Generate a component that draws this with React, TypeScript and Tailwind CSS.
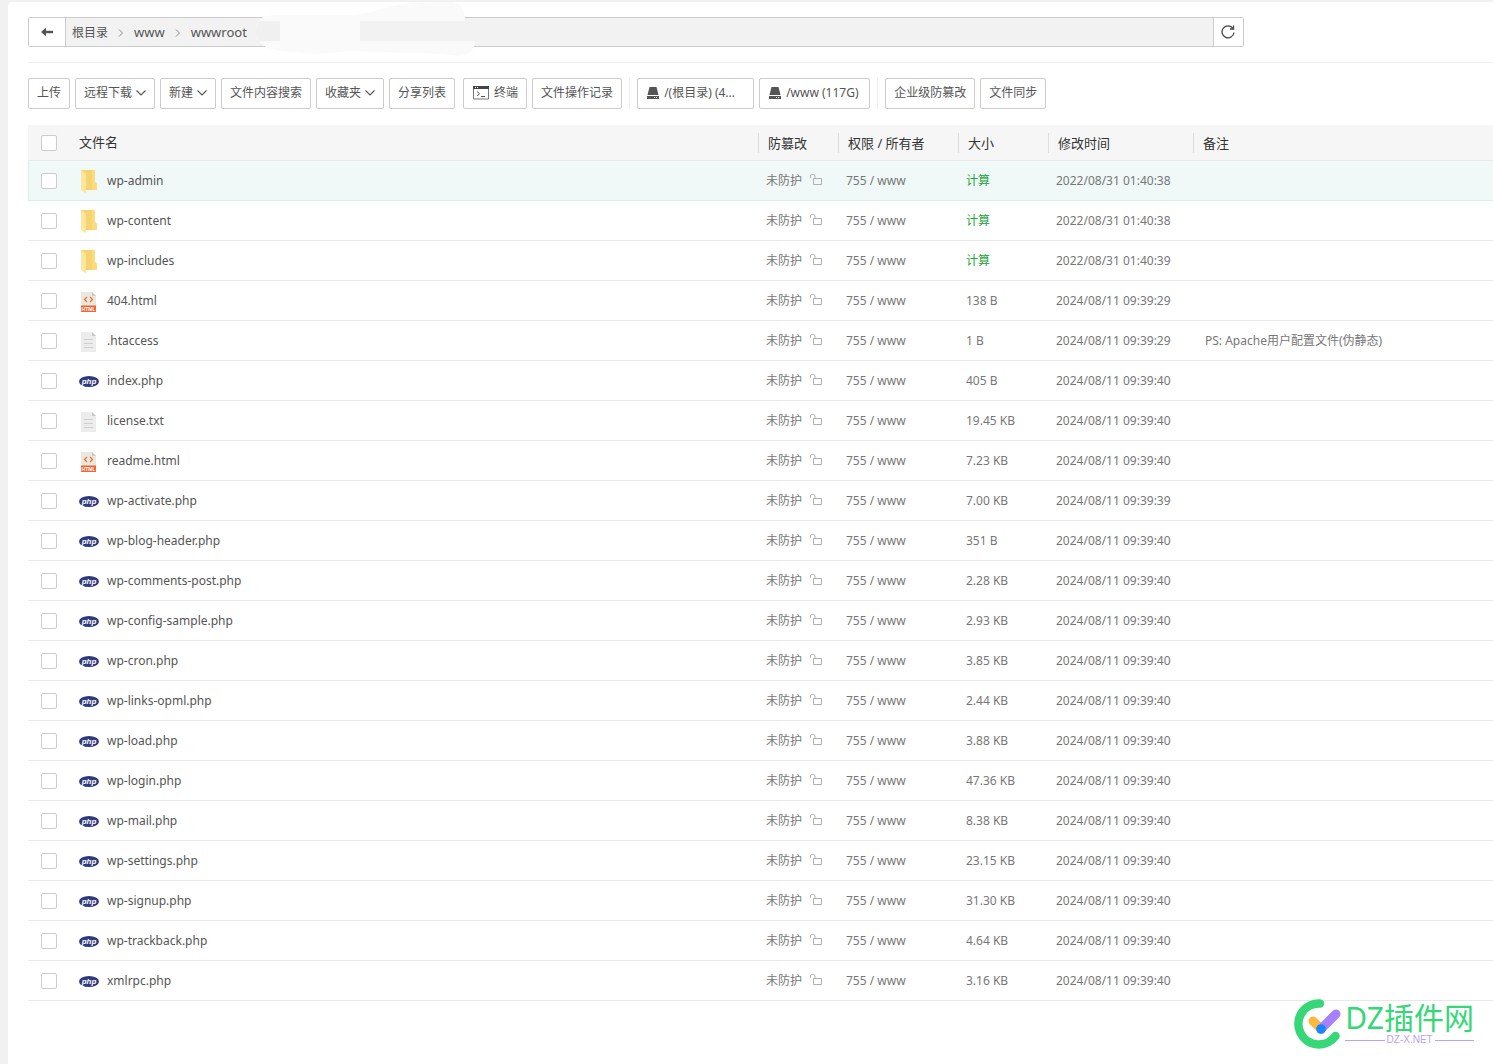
import React from 'react';
import { clsx } from 'clsx';

type FileKind = 'folder' | 'html' | 'text' | 'php';

interface FileItem {
	name: string;
	kind: FileKind;
	size?: string;
	time: string;
	note?: string;
}

const FILES: FileItem[] = [
	{ name: 'wp-admin', kind: 'folder', time: '2022/08/31 01:40:38' },
	{ name: 'wp-content', kind: 'folder', time: '2022/08/31 01:40:38' },
	{ name: 'wp-includes', kind: 'folder', time: '2022/08/31 01:40:39' },
	{ name: '404.html', kind: 'html', size: '138 B', time: '2024/08/11 09:39:29' },
	{
		name: '.htaccess',
		kind: 'text',
		size: '1 B',
		time: '2024/08/11 09:39:29',
		note: 'PS: Apache用户配置文件(伪静态)',
	},
	{ name: 'index.php', kind: 'php', size: '405 B', time: '2024/08/11 09:39:40' },
	{ name: 'license.txt', kind: 'text', size: '19.45 KB', time: '2024/08/11 09:39:40' },
	{ name: 'readme.html', kind: 'html', size: '7.23 KB', time: '2024/08/11 09:39:40' },
	{ name: 'wp-activate.php', kind: 'php', size: '7.00 KB', time: '2024/08/11 09:39:39' },
	{ name: 'wp-blog-header.php', kind: 'php', size: '351 B', time: '2024/08/11 09:39:40' },
	{ name: 'wp-comments-post.php', kind: 'php', size: '2.28 KB', time: '2024/08/11 09:39:40' },
	{ name: 'wp-config-sample.php', kind: 'php', size: '2.93 KB', time: '2024/08/11 09:39:40' },
	{ name: 'wp-cron.php', kind: 'php', size: '3.85 KB', time: '2024/08/11 09:39:40' },
	{ name: 'wp-links-opml.php', kind: 'php', size: '2.44 KB', time: '2024/08/11 09:39:40' },
	{ name: 'wp-load.php', kind: 'php', size: '3.88 KB', time: '2024/08/11 09:39:40' },
	{ name: 'wp-login.php', kind: 'php', size: '47.36 KB', time: '2024/08/11 09:39:40' },
	{ name: 'wp-mail.php', kind: 'php', size: '8.38 KB', time: '2024/08/11 09:39:40' },
	{ name: 'wp-settings.php', kind: 'php', size: '23.15 KB', time: '2024/08/11 09:39:40' },
	{ name: 'wp-signup.php', kind: 'php', size: '31.30 KB', time: '2024/08/11 09:39:40' },
	{ name: 'wp-trackback.php', kind: 'php', size: '4.64 KB', time: '2024/08/11 09:39:40' },
	{ name: 'xmlrpc.php', kind: 'php', size: '3.16 KB', time: '2024/08/11 09:39:40' },
];

const FolderIcon = () => (
	<svg width="20" height="26" viewBox="0 0 20 26">
		<path d="M2 2H16V14L18 16V22H4Z" fill="#f5d470" />
		<path d="M13 2H16V14L18 16V22H13Z" fill="#f9dc80" />
		<path d="M2 2L7 6V25.500L2 22Z" fill="#fde59b" />
	</svg>
);

const HtmlIcon = () => (
	<svg width="20" height="26" viewBox="0 0 20 26">
		<path d="M2 4H13L17 8V24H2Z" fill="#e8e8dc" />
		<path d="M13 4L17 8H13Z" fill="#c9c9be" />
		<path
			d="M8 9L5.500 11.500L8 14M11 9L13.500 11.500L11 14"
			fill="none"
			stroke="#f16c3a"
			strokeWidth="1.200"
		/>
		<rect x="2" y="17.500" width="15" height="6.500" fill="#f0642f" />
		<text
			x="9.500"
			y="22.800"
			textAnchor="middle"
			fontSize="5"
			fontWeight="700"
			fontFamily="Liberation Sans, sans-serif"
			fill="#fff"
		>
			HTML
		</text>
	</svg>
);

const TextIcon = () => (
	<svg width="20" height="26" viewBox="0 0 20 26">
		<path d="M2 4H13L17 8V24H2Z" fill="#ececec" />
		<path d="M13 4L17 8H13Z" fill="#c6c6c6" />
		<path d="M5 11.500H14M5 15.500H14M5 19.500H14" stroke="#cfcfcf" />
	</svg>
);

const PhpIcon = () => (
	<svg width="20" height="26" viewBox="0 0 20 26">
		<ellipse cx="10" cy="13.500" rx="10" ry="5.500" fill="#2f3b7e" />
		<text
			x="10"
			y="16"
			textAnchor="middle"
			fontSize="8"
			fontWeight="700"
			fontStyle="italic"
			fontFamily="Liberation Sans, sans-serif"
			fill="#fff"
		>
			php
		</text>
	</svg>
);

const KIND_ICONS = {
	folder: FolderIcon,
	html: HtmlIcon,
	text: TextIcon,
	php: PhpIcon,
};

const UnlockIcon = () => (
	<svg width="12" height="13" viewBox="0 0 12 13" fill="none" stroke="#b0b0b0">
		<path d="M3.500 10.500V4.500H11.500V10.500Z" />
		<path d="M0.500 4V2Q0.500 0.500 2 0.500H3.500Q5 0.500 5 2V4" />
	</svg>
);

const ChevronDown = () => (
	<svg width="10" height="6" viewBox="0 0 10 6" fill="none" stroke="#555" strokeWidth="1.100">
		<path d="M0.500 0.500L5 5L9.500 0.500" />
	</svg>
);

const Crumb = () => (
	<svg width="6" height="8" viewBox="0 0 6 8" fill="none" stroke="#888">
		<path d="M1 0.500L4.500 4L1 7.500" />
	</svg>
);

const TerminalIcon = () => (
	<svg width="16" height="14" viewBox="0 0 16 14" fill="none" stroke="#777">
		<path d="M0.500 0.500H15.500V13H0.500Z" />
		<path d="M0 1.500H16" stroke="#444" strokeWidth="3" />
		<path d="M2 1.500H3M4 1.500H5" stroke="#fff" />
		<path d="M4 5.500L6.500 7.800L4 10M8 10.500H12" stroke="#555" />
	</svg>
);

const DiskIcon = () => (
	<svg width="12" height="14" viewBox="0 0 12 14" fill="#555">
		<path d="M2.500 1H9.500L11.500 9H0.500Z" />
		<path d="M0 10H12V13H0Z" />
		<path d="M7 11H8V12H7ZM9 11H10V12H9Z" fill="#fff" />
	</svg>
);

interface ToolButtonProps {
	label: string;
	icon?: React.ReactNode;
	dropdown?: boolean;
	className?: string;
}

const ToolButton = ({ label, icon, dropdown, className }: ToolButtonProps) => (
	<button
		type="button"
		className={clsx(
			'flex h-[31px] shrink-0 items-center rounded-xs border border-[#ccc] bg-white pr-2 pb-px text-[12px] whitespace-nowrap text-[#555]',
			icon ? 'gap-[5px] pl-[9px]' : 'pl-2',
			className,
		)}
	>
		{icon}
		{label}
		{dropdown && (
			<span className="ml-1">
				<ChevronDown />
			</span>
		)}
	</button>
);

const Divider = () => <span className="mx-[2px] h-[31px] w-px bg-[#eee]" />;

const Checkbox = ({ label }: { label: string }) => (
	<input
		type="checkbox"
		aria-label={label}
		className="block size-4 appearance-none rounded-xs border border-[#ccc] bg-white"
	/>
);

const HEADERS = ['防篡改', '权限 / 所有者', '大小', '修改时间', '备注'];

const FileRow = ({ file, active }: { file: FileItem; active: boolean }) => {
	const KindIcon = KIND_ICONS[file.kind];
	const cell = clsx('h-10 border-b p-0 pl-2', active ? 'border-[#d5efe9]' : 'border-[#e8e8e8]');

	return (
		<tr className={clsx(active && 'bg-[#f0f8f8]')}>
			<td className={clsx(cell, 'border-l pl-3', !active && 'border-l-transparent')}>
				<Checkbox label={file.name} />
			</td>
			<td className={cell}>
				<div className="flex items-center gap-2 text-[#555]">
					<KindIcon />
					{file.name}
				</div>
			</td>
			<td className={cell}>
				<div className="flex items-center gap-2">
					未防护
					<UnlockIcon />
				</div>
			</td>
			<td className={cell}>755 / www</td>
			<td className={cell}>
				{file.size ?? (
					<a href="#" className="text-[#20a53a]">
						计算
					</a>
				)}
			</td>
			<td className={cell}>{file.time}</td>
			<td className={cell}>
				<span className="pl-1">{file.note}</span>
			</td>
		</tr>
	);
};

const Watermark = () => (
	<div className="absolute right-[19px] bottom-[15px] flex items-center gap-[2px]">
		<svg width="50" height="52" viewBox="0 0 50 52" fill="none" strokeLinecap="round">
			<path d="M27 5.500A20.500 20.500 0 1 0 42.500 38" stroke="#36d777" strokeWidth="8.500" />
			<path d="M20 23L28 31" stroke="#ffb83e" strokeWidth="9" />
			<path d="M28 31L43 16" stroke="#a680ff" strokeWidth="9" />
			<circle cx="28" cy="31" r="4.800" fill="#1686ff" />
		</svg>
		<div className="flex flex-col">
			<span className="text-[30px] leading-8 text-[#36d777]">DZ插件网</span>
			<span className="flex items-center gap-[2px] font-['Liberation_Sans',sans-serif] text-[10px] leading-3 text-[#b9a2f2]">
				<span className="h-px flex-1 bg-[#b9a2f2]" />
				DZ-X.NET
				<span className="h-px flex-1 bg-[#b9a2f2]" />
			</span>
		</div>
	</div>
);

const PathBar = () => (
	<div className="relative mr-5 flex h-[30px] w-[83%] rounded-xs border border-[#ccc] bg-[#f2f2f2]">
		<button
			type="button"
			aria-label="返回"
			className="flex w-[37px] items-center justify-center border-r border-[#ccc] bg-white"
		>
			<svg width="12" height="10" viewBox="0 0 12 10" fill="#555">
				<path d="M0 5L5 0.500V3.700H12V6.300H5V9.500Z" />
			</svg>
		</button>
		<nav className="flex flex-1 items-center gap-[10px] pt-[2px] pl-[6px] text-[13px] text-[#555]">
			<a href="#" className="text-[12px]">
				根目录
			</a>
			<Crumb />
			<a href="#">www</a>
			<Crumb />
			<a href="#">wwwroot</a>
		</nav>
		<button
			type="button"
			aria-label="刷新"
			className="flex w-[30px] items-center justify-center border-l border-[#ccc] bg-white"
		>
			<svg width="14" height="14" viewBox="0 0 14 14" fill="none" stroke="#444" strokeWidth="1.300">
				<path d="M12 3.500A6 6 0 1 0 13 7.500" />
				<path d="M12.500 0.500V4H9" />
			</svg>
		</button>
		{/* brushed-out part of the path */}
		<svg
			className="absolute -top-[17px] left-[226px]"
			width="222"
			height="56"
			viewBox="0 0 222 56"
		>
			<path
				d="M1 34Q0 22 8 16Q14 14 24 14L98 14Q112 13 126 8Q150 1 180 1H198Q210 4 210 20L220 41Q219 53 204 55Q194 54 188 53L92 50Q65 55 42 51Q15 51 5 42Z"
				fill="#fafafa"
			/>
			<path d="M1 34Q0 26 5 20H25V40H4Z" fill="#f0f0f0" />
			<path d="M105 20H222V40H105Z" fill="#f2f2f2" />
		</svg>
	</div>
);

const App = () => {
	return (
		<div className="min-h-screen overflow-x-hidden bg-[#f1f1f1] pt-[2px] pl-2 font-['Noto_Sans','Noto_Sans_CJK_SC',sans-serif]">
			<main className="relative min-h-[calc(100vh-2px)] rounded-tl-sm bg-white pt-[15px] pb-16 pl-5">
				<PathBar />

				<div className="mt-[15px] flex items-center gap-[5px] border-t border-[#eee] pt-[15px]">
					<ToolButton label="上传" />
					<ToolButton label="远程下载" dropdown />
					<ToolButton label="新建" dropdown />
					<ToolButton label="文件内容搜索" />
					<ToolButton label="收藏夹" dropdown />
					<ToolButton label="分享列表" />
					<ToolButton label="终端" icon={<TerminalIcon />} className="ml-[3px]" />
					<ToolButton label="文件操作记录" />
					<Divider />
					<ToolButton label="/(根目录) (4..." icon={<DiskIcon />} className="w-[117px]" />
					<ToolButton label="/www (117G)" icon={<DiskIcon />} className="w-[111px]" />
					<Divider />
					<ToolButton label="企业级防篡改" />
					<ToolButton label="文件同步" />
				</div>

				<table className="mt-4 w-full table-fixed border-separate border-spacing-0 text-left text-[12px] text-[#777]">
					<colgroup>
						<col className="w-[43px]" />
						<col />
						<col className="w-[80px]" />
						<col className="w-[120px]" />
						<col className="w-[90px]" />
						<col className="w-[145px]" />
						<col className="w-[300px]" />
					</colgroup>
					<thead className="bg-[#f6f6f6] text-[13px] text-[#333]">
						<tr>
							<th className="h-9 border-b border-[#e8e8e8] p-0 pl-[13px]">
								<Checkbox label="全选" />
							</th>
							<th className="border-b border-[#e8e8e8] p-0 pl-2 font-normal">文件名</th>
							{HEADERS.map((title) => (
								<th key={title} className="border-b border-[#e8e8e8] p-0 font-normal">
									<div className="h-5 border-l border-[#ddd] pl-[9px] leading-5 whitespace-nowrap">
										{title}
									</div>
								</th>
							))}
						</tr>
					</thead>
					<tbody>
						{FILES.map((file, index) => (
							<FileRow key={file.name} file={file} active={index === 0} />
						))}
					</tbody>
				</table>

				<Watermark />
			</main>
		</div>
	);
};

export default App;
